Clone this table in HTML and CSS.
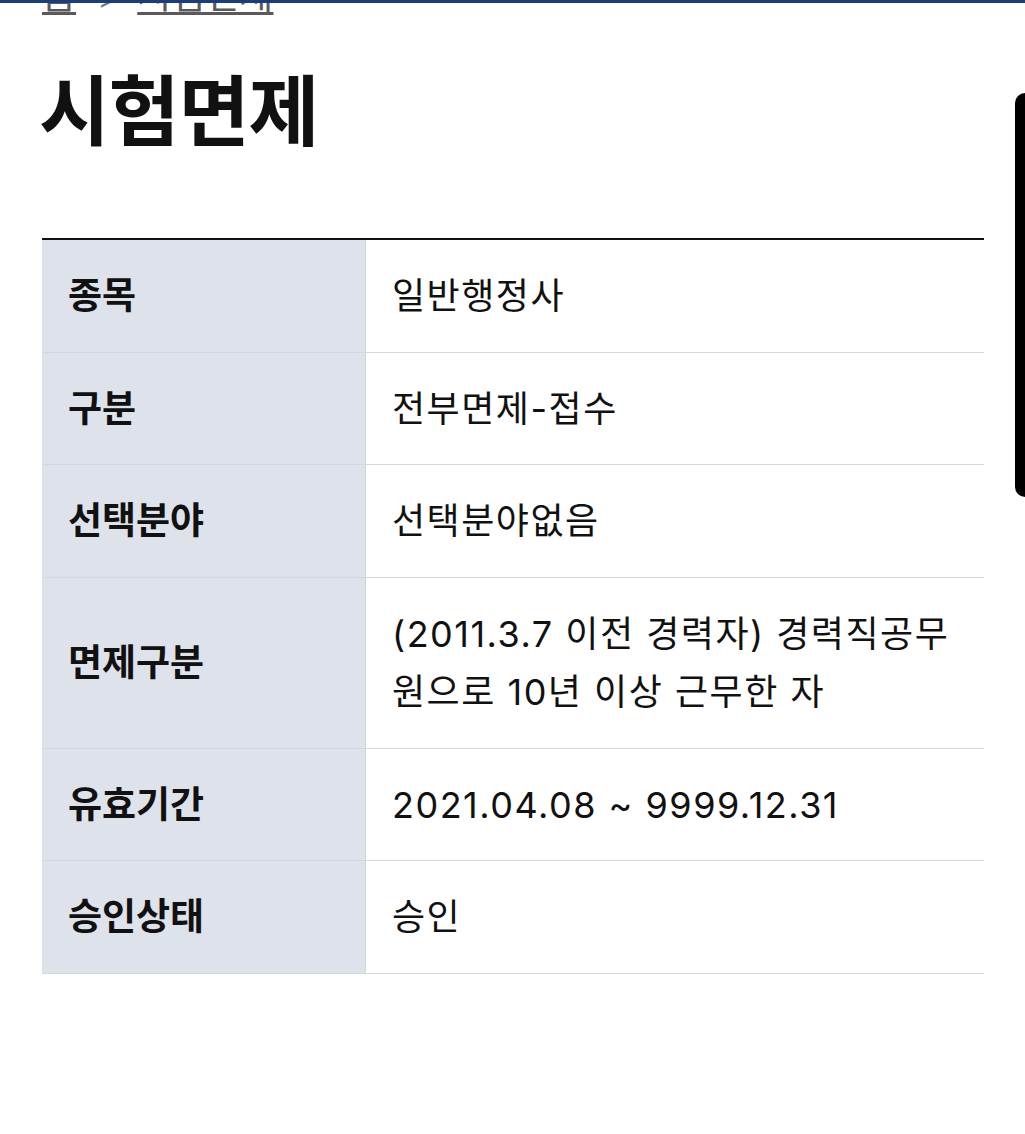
FILE: index.html
```html
<!DOCTYPE html>
<html lang="ko">
<head>
<meta charset="utf-8">
<title>시험면제</title>
<link rel="stylesheet" href="styles.css">
</head>
<body>
<div class="topbar"></div>
<div class="scroll-indicator"></div>
<main class="page">
  <nav class="breadcrumb">
    <a href="#" class="crumb">홈</a>
    <span class="sep">&gt;</span>
    <a href="#" class="crumb">시험면제</a>
  </nav>
  <h1 class="title">시험면제</h1>
  <table class="info">
    <tbody>
      <tr><th>종목</th><td>일반행정사</td></tr>
      <tr><th>구분</th><td>전부면제-접수</td></tr>
      <tr><th>선택분야</th><td>선택분야없음</td></tr>
      <tr><th>면제구분</th><td>(2011.3.7 이전 경력자) 경력직공무원으로 10년 이상 근무한 자</td></tr>
      <tr><th>유효기간</th><td>2021.04.08 ~ 9999.12.31</td></tr>
      <tr><th>승인상태</th><td>승인</td></tr>
    </tbody>
  </table>
</main>
</body>
</html>
```

FILE: styles.css
```css
html, body {
  margin: 0;
  padding: 0;
  background: #ffffff;
}
body {
  font-family: "Inter", "Noto Sans CJK KR", sans-serif;
  color: #111111;
  overflow: hidden;
}
.topbar {
  position: fixed;
  top: 0;
  left: 0;
  right: 0;
  height: 3px;
  background: #1c3c7c;
  z-index: 5;
}
.scroll-indicator {
  position: fixed;
  top: 93px;
  right: 0;
  width: 10px;
  height: 404px;
  background: #000000;
  border-radius: 10px 0 0 10px;
  z-index: 5;
}
.page {
  padding: 0 41px 0 42px;
}
.breadcrumb {
  margin-top: -26px;
  font-size: 37px;
  line-height: 44px;
  color: #555555;
  display: flex;
  gap: 22px;
  align-items: baseline;
}
.crumb {
  color: #5a5a5a;
  text-decoration: underline;
  text-decoration-thickness: 3px;
  text-underline-offset: 3px;
}
.sep {
  color: #777777;
  font-size: 26px;
}
.title {
  margin: 44px 0 0 -3px;
  font-size: 77px;
  font-weight: 700;
  line-height: 92px;
  letter-spacing: -1px;
}
.info {
  margin-top: 80px;
  width: 100%;
  border-collapse: collapse;
  border-top: 2px solid #111111;
}
.info th,
.info td {
  line-height: 58.5px;
  padding: 27px 26px 26px 26px;
  text-align: left;
  vertical-align: middle;
  border-bottom: 1px solid #d5d7db;
}
.info th {
  width: 271px;
  font-size: 37px;
  background: #dee2eb;
  font-weight: 700;
  letter-spacing: 0;
  border-right: 1px solid #d5d7db;
}
.info td {
  font-size: 36px;
  font-weight: 400;
  letter-spacing: 1.5px;
}
```
